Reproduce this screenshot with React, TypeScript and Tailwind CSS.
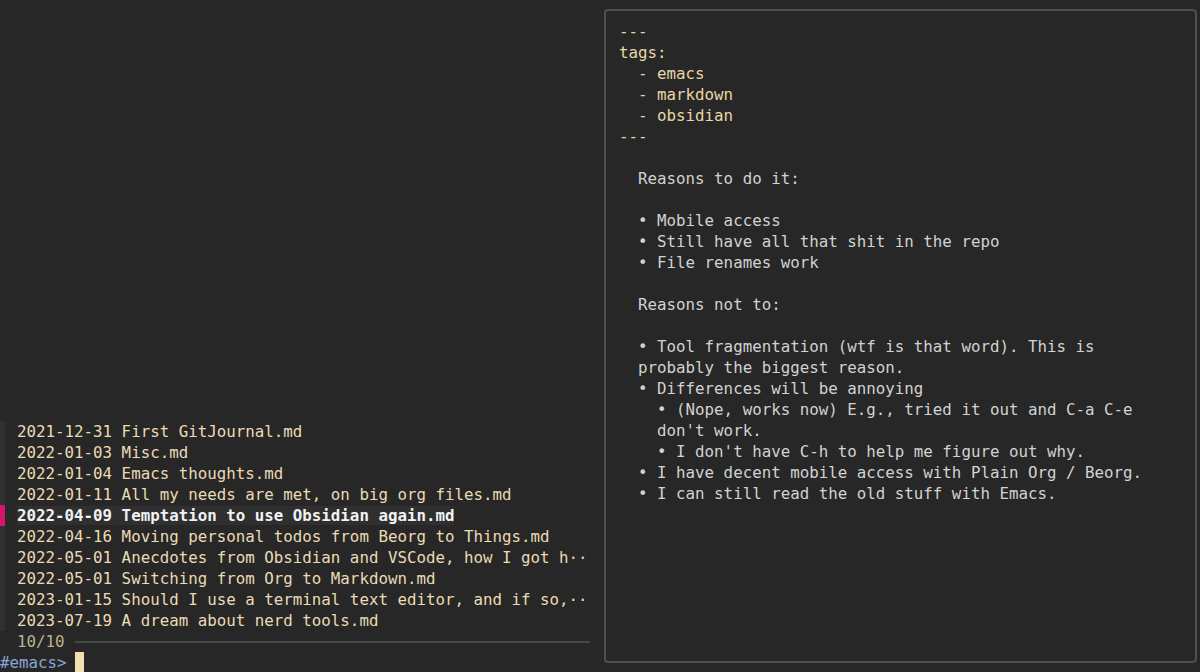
import React from "react";

const files = [
  "2021-12-31 First GitJournal.md",
  "2022-01-03 Misc.md",
  "2022-01-04 Emacs thoughts.md",
  "2022-01-11 All my needs are met, on big org files.md",
  "2022-04-09 Temptation to use Obsidian again.md",
  "2022-04-16 Moving personal todos from Beorg to Things.md",
  "2022-05-01 Anecdotes from Obsidian and VSCode, how I got h··",
  "2022-05-01 Switching from Org to Markdown.md",
  "2023-01-15 Should I use a terminal text editor, and if so,··",
  "2023-07-19 A dream about nerd tools.md",
];

const front = ["---", "tags:", "  - emacs", "  - markdown", "  - obsidian", "---"];
const body = [
  "",
  "  Reasons to do it:",
  "",
  "  • Mobile access",
  "  • Still have all that shit in the repo",
  "  • File renames work",
  "",
  "  Reasons not to:",
  "",
  "  • Tool fragmentation (wtf is that word). This is",
  "  probably the biggest reason.",
  "  • Differences will be annoying",
  "    • (Nope, works now) E.g., tried it out and C-a C-e",
  "    don't work.",
  "    • I don't have C-h to help me figure out why.",
  "  • I have decent mobile access with Plain Org / Beorg.",
  "  • I can still read the old stuff with Emacs.",
];

export default function App() {
  return (
    <div
      className="w-[1200px] h-[672px] bg-[#272727] flex overflow-hidden text-[15.8px] leading-[21px]"
      style={{ fontFamily: '"DejaVu Sans Mono", "Liberation Mono", monospace' }}
    >
      <div className="w-[604px] h-[672px] flex flex-col justify-end shrink-0">
        {files.map((f, i) => {
          const sel = i === 4;
          return (
            <div key={i} className="flex h-[21px] items-stretch">
              <div className={sel ? "w-[5px] bg-[#d4166b]" : "w-[5px] bg-[#303030]"} />
              <div className="pl-[12px] whitespace-pre">
                {sel ? (
                  <span className="bg-[#2f2f2f] text-[#f2f2f2] font-bold">{f}</span>
                ) : (
                  <span className="text-[#eadbb4]">{f}</span>
                )}
              </div>
            </div>
          );
        })}
        <div className="flex h-[21px] items-center">
          <span className="pl-[17px] text-[#b9b38c]">10/10</span>
          <div className="flex-1 h-[2px] bg-[#474747] ml-[10px] mr-[14px]" />
        </div>
        <div className="flex h-[20px] items-stretch">
          <span className="text-[#88a6d4]">#emacs&gt;</span>
          <span className="w-[9px] bg-[#f2deb0] ml-[8px]" />
        </div>
      </div>
      <div className="mt-[9px] w-[593px] h-[654px] border-2 border-[#4f4f4f] rounded-[4px] pt-[10px] pl-[13px] whitespace-pre">
        {front.map((l, i) => (
          <div key={"f" + i} className="h-[21px] text-[#e8d6a8]">
            {l}
          </div>
        ))}
        {body.map((l, i) => (
          <div key={"b" + i} className="h-[21px] text-[#d2d2d2]">
            {l}
          </div>
        ))}
      </div>
    </div>
  );
}
